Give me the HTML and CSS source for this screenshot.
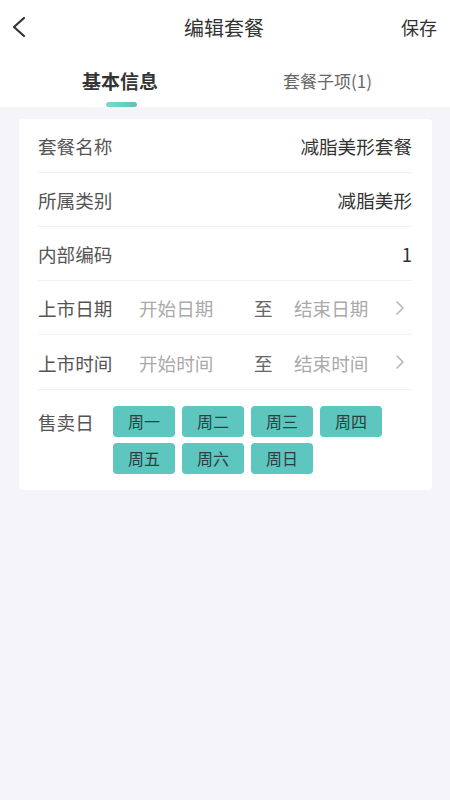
FILE: index.html
```html
<!DOCTYPE html>
<html lang="zh-CN">
<head>
    <meta charset="UTF-8">
    <meta name="viewport" content="width=device-width, initial-scale=1.0">
    <title>编辑套餐</title>
    <link rel="stylesheet" href="styles.css">
</head>
<body>
    <div class="top">
        <div class="nav-bar">
            <span class="back">
                <svg width="16" height="22" viewBox="0 0 16 22"><path d="M13 2 L3 11 L13 20" fill="none" stroke="#333" stroke-width="2.2" stroke-linecap="round" stroke-linejoin="round"/></svg>
            </span>
            <span class="title">编辑套餐</span>
            <span class="save">保存</span>
        </div>
        <div class="tabs">
            <div class="tab active">基本信息<i class="bar"></i></div>
            <div class="tab">套餐子项(1)</div>
        </div>
    </div>

    <div class="card">
        <div class="row">
            <span class="label">套餐名称</span>
            <span class="value">减脂美形套餐</span>
        </div>
        <div class="row">
            <span class="label">所属类别</span>
            <span class="value">减脂美形</span>
        </div>
        <div class="row">
            <span class="label">内部编码</span>
            <span class="value">1</span>
        </div>
        <div class="row">
            <span class="label">上市日期</span>
            <span class="range-start">开始日期</span>
            <span class="to">至</span>
            <span class="range-end">结束日期</span>
            <svg class="arrow" width="10" height="16" viewBox="0 0 10 16"><path d="M2 2 L8 8 L2 14" fill="none" stroke="#b5b5b5" stroke-width="1.5" stroke-linecap="round" stroke-linejoin="round"/></svg>
        </div>
        <div class="row tall">
            <span class="label">上市时间</span>
            <span class="range-start">开始时间</span>
            <span class="to">至</span>
            <span class="range-end">结束时间</span>
            <svg class="arrow" width="10" height="16" viewBox="0 0 10 16"><path d="M2 2 L8 8 L2 14" fill="none" stroke="#b5b5b5" stroke-width="1.5" stroke-linecap="round" stroke-linejoin="round"/></svg>
        </div>
        <div class="days-row">
            <span class="days-label">售卖日</span>
            <div class="days">
                <span class="day">周一</span>
                <span class="day">周二</span>
                <span class="day">周三</span>
                <span class="day">周四</span>
                <span class="day">周五</span>
                <span class="day">周六</span>
                <span class="day">周日</span>
            </div>
        </div>
    </div>
</body>
</html>
```

FILE: styles.css
```css
body {
    margin: 0;
    background: #f4f4f9;
    font-family: "Noto Sans CJK SC", "Noto Sans", sans-serif;
    color: #333;
}
.top {
    background: #fff;
}
.nav-bar {
    height: 54px;
    display: flex;
    align-items: center;
    justify-content: space-between;
    padding: 0 13px 0 11px;
}
.back {
    width: 40px;
    display: flex;
    align-items: center;
}
.title {
    font-size: 20px;
    color: #333;
}
.save {
    width: 40px;
    text-align: right;
    font-size: 18px;
    color: #333;
}
.tabs {
    height: 53px;
    display: flex;
}
.tab {
    box-sizing: border-box;
    position: relative;
    display: flex;
    align-items: center;
    font-size: 17px;
    color: #666;
    padding-bottom: 1px;
}
.tab.active {
    flex: 0 0 283px;
    padding-left: 82px;
    font-size: 19px;
    font-weight: bold;
    color: #333;
}
.tab .bar {
    position: absolute;
    left: 106px;
    bottom: 0;
    width: 31px;
    height: 5px;
    border-radius: 3px;
    background: linear-gradient(90deg, #7dd8ce, #58c4ba);
}
.tab:last-child {
    flex: 1;
}
.card {
    margin: 12px 18px 0 19px;
    background: #fff;
    border-radius: 4px;
    padding: 0 20px 0 19px;
}
.row {
    height: 53px;
    display: flex;
    align-items: center;
    border-bottom: 1px solid #f1f1f3;
    font-size: 18.6px;
}
.row.tall {
    height: 54px;
}
.label {
    width: 101px;
    color: #555;
}
.value {
    flex: 1;
    text-align: right;
    color: #333;
}
.range-start {
    width: 115px;
    color: #aaa;
}
.to {
    width: 40px;
    color: #666;
}
.range-end {
    flex: 1;
    color: #aaa;
}
.arrow {
    margin-right: 7px;
}
.days-row {
    display: flex;
    align-items: flex-start;
    padding: 16px 0 16px;
}
.days-label {
    width: 75px;
    font-size: 18.6px;
    color: #555;
    line-height: 31px;
}
.days {
    flex: 1;
    display: flex;
    flex-wrap: wrap;
    gap: 6px 7px;
}
.day {
    width: 62px;
    height: 31px;
    line-height: 31px;
    text-align: center;
    background: #5cc6bf;
    border-radius: 4px;
    font-size: 16px;
    color: #2e3e3d;
}
```
